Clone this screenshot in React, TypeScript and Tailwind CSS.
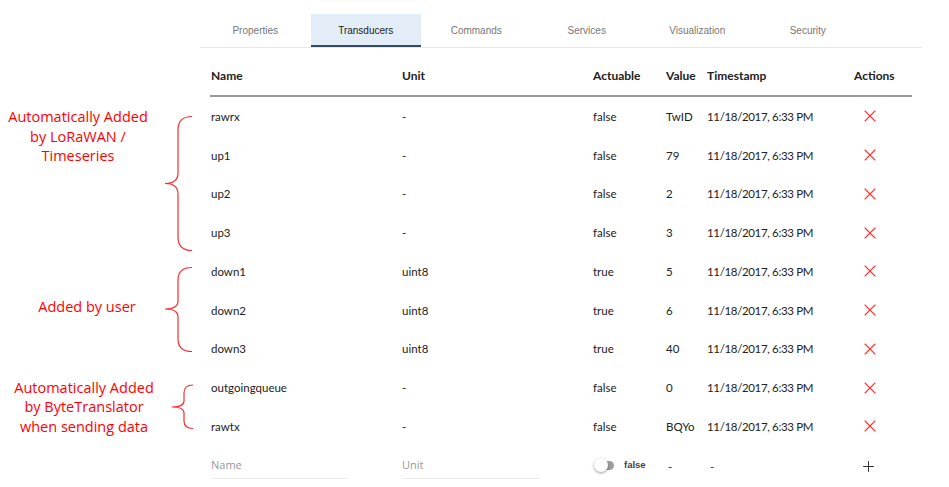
import { Plus, X } from "lucide-react";

const tabs = ["Properties", "Transducers", "Commands", "Services", "Visualization", "Security"];

type Row = { name: string; unit: string; actuable: string; value: string };

const groups: {
  lines: string[];
  rows: Row[];
  textClass: string;
  brace: string;
}[] = [
  {
    lines: ["Automatically Added", "by LoRaWAN /", "Timeseries"],
    textClass: "w-[156px] pt-[10px] justify-start",
    brace: "M192 19.5 C182 19.5 178 24 178 33 L178 76 C178 82 174 86.5 165 86.5 C174 86.5 178 91 178 97 L178 140 C178 149 182 153.5 192 153.5",
    rows: [
      { name: "rawrx", unit: "-", actuable: "false", value: "TwID" },
      { name: "up1", unit: "-", actuable: "false", value: "79" },
      { name: "up2", unit: "-", actuable: "false", value: "2" },
      { name: "up3", unit: "-", actuable: "false", value: "3" },
    ],
  },
  {
    lines: ["Added by user"],
    textClass: "w-[174px] pb-[6px] justify-center",
    brace: "M192 15.5 C182 15.5 178 20 178 28 L178 49 C178 54 174 57 165 57 C174 57 178 60 178 65 L178 87 C178 95 182 99.5 192 99.5",
    rows: [
      { name: "down1", unit: "uint8", actuable: "true", value: "5" },
      { name: "down2", unit: "uint8", actuable: "true", value: "6" },
      { name: "down3", unit: "uint8", actuable: "true", value: "40" },
    ],
  },
  {
    lines: ["Automatically Added", "by ByteTranslator", "when sending data"],
    textClass: "w-[168px] justify-center",
    brace: "M193 17 C187 17 184 20 184 25 L184 33 C184 37 180 39 172 39 C180 39 184 41 184 45 L184 53 C184 58 187 60.5 193 60.5",
    rows: [
      { name: "outgoingqueue", unit: "-", actuable: "false", value: "0" },
      { name: "rawtx", unit: "-", actuable: "false", value: "BQYo" },
    ],
  },
];

const cols = "grid grid-cols-[191px_191px_73px_41px_145px_60px]";

function DataRow({ row }: { row: Row }) {
  return (
    <div className={`${cols} h-[38.75px] items-center pl-[1px] text-[11.5px] text-[#222]`}>
      <span>{row.name}</span>
      <span>{row.unit}</span>
      <span>{row.actuable}</span>
      <span>{row.value}</span>
      <span className="tracking-[-0.35px]">11/18/2017, 6:33 PM</span>
      <span className="flex pl-[8px]">
        <X size={20} strokeWidth={1.3} className="text-[#f33]" />
      </span>
    </div>
  );
}

export default function App() {
  return (
    <div className="h-[487px] w-[949px] bg-white font-['Lato',sans-serif]">
      <div className="flex pt-[14px]">
        <div className="w-[200px] shrink-0" />
        <div className="w-[722px]">
          <nav className="flex h-[34px] border-b border-[#e8e8e8] font-['Liberation_Sans',sans-serif] text-[10px]">
            {tabs.map((tab) => (
              <div
                key={tab}
                className={
                  tab === "Transducers"
                    ? "flex w-[110.5px] items-center justify-center border-b-2 border-[#34495e] bg-[#e3edf8] pt-[2px] text-[#222]"
                    : "flex w-[110.5px] items-center justify-center text-[#777]"
                }
              >
                {tab}
              </div>
            ))}
          </nav>
          <div className="px-[10px]">
            <div className={`${cols} h-[49px] items-center border-b-2 border-[#9a9a9a] pl-[1px] pt-[8px] text-[12px] font-bold text-[#222]`}>
              <span>Name</span>
              <span>Unit</span>
              <span>Actuable</span>
              <span>Value</span>
              <span>Timestamp</span>
              <span className="pl-[2px]">Actions</span>
            </div>
          </div>
        </div>
      </div>

      {groups.map((g, i) => (
        <div key={i} className="flex">
          <div className="relative flex w-[200px] shrink-0">
            <div
              className={`flex flex-col items-center font-['Open_Sans',sans-serif] text-[14.5px] leading-[19.5px] text-[#ff0000] ${g.textClass}`}
            >
              {g.lines.map((l) => (
                <span key={l} className="whitespace-nowrap">{l}</span>
              ))}
            </div>
            <svg
              className="absolute left-0 top-0 h-full w-[200px]"
              viewBox={`0 0 200 ${g.rows.length * 38.75}`}
              preserveAspectRatio="none"
            >
              <path d={g.brace} fill="none" stroke="#ff2b2b" strokeWidth="1.2" />
            </svg>
          </div>
          <div className="w-[722px] px-[10px]">
            {g.rows.map((r) => (
              <DataRow key={r.name} row={r} />
            ))}
          </div>
        </div>
      ))}

      <div className="flex">
        <div className="w-[200px] shrink-0" />
        <div className="w-[722px] px-[10px]">
          <div className={`${cols} h-[37px] items-center pl-[1px] text-[11.5px] text-[#333]`}>
            <span className="w-[138px] border-b border-[#ececec] pb-[4px] pt-[7px] font-['Open_Sans',sans-serif] text-[11px] text-[#999]">
              Name
            </span>
            <span className="w-[138px] border-b border-[#ececec] pb-[4px] pt-[7px] font-['Open_Sans',sans-serif] text-[11px] text-[#999]">
              Unit
            </span>
            <span className="flex items-center gap-[9px] pt-[2px]">
              <span className="relative ml-[1px] flex h-[14px] w-[21px] items-center">
                <span className="ml-[3px] h-[9px] w-[17px] rounded-full bg-[#9e9e9e]" />
                <span className="absolute left-0 top-0 h-[14px] w-[14px] rounded-full bg-white shadow-[0_1px_3px_rgba(0,0,0,0.4)]" />
              </span>
              <span className="font-['Liberation_Sans',sans-serif] text-[9.5px] font-bold text-[#444]">false</span>
            </span>
            <span className="pl-[2px] pt-[4px]">-</span>
            <span className="pl-[3px] pt-[4px]">-</span>
            <span className="flex pl-[8px] pt-[4px]">
              <Plus size={17} strokeWidth={1.3} className="text-[#222]" />
            </span>
          </div>
        </div>
      </div>
    </div>
  );
}
